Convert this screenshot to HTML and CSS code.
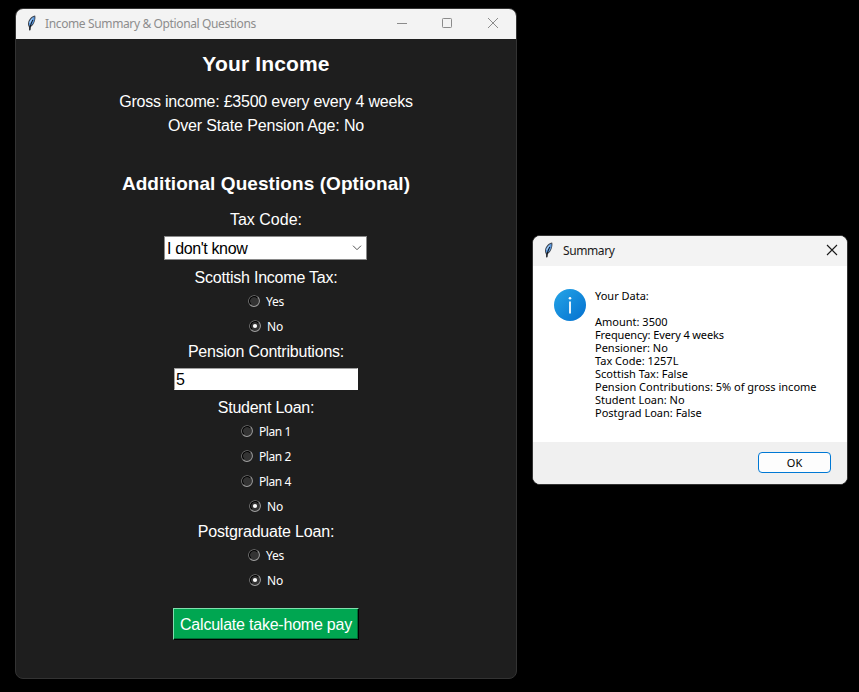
FILE: index.html
```html
<!DOCTYPE html>
<html lang="en">
<head>
<meta charset="utf-8">
<title>Income Summary &amp; Optional Questions</title>
<link rel="stylesheet" href="styles.css">
</head>
<body>
<svg width="0" height="0" class="defs">
  <symbol id="feather" viewBox="0 0 9 16">
    <path d="M8.1 .5 C5.2 .8 2.4 3.6 1.4 6.6 C.8 8.6 .9 10.6 1.9 12 L2.4 15.4 L3.3 15.2 L3.4 12.3 C5.6 11.2 7.6 8 8.2 4.6 C8.5 3 8.5 1.4 8.1 .5Z" fill="#3c4048"/>
    <path d="M7.4 1.5 C5 2.4 2.8 5 2 7.4 L2 10 L3 11 C5.4 9.6 7 7.4 7.5 4.4 Z" fill="#5b9ae0"/>
    <path d="M6.2 2.4 C4.4 3.6 3 5.4 2.4 7.4 L3 8.4 Z" fill="#a9cdf2"/>
    <path d="M5.9 5 C4.5 7.4 3.2 10 2.8 15.2" fill="none" stroke="#0c1017" stroke-width="1"/>
  </symbol>
  <symbol id="radio-ring" viewBox="0 0 12 12">
    <circle cx="6" cy="6" r="5" fill="#333"/>
    <path d="M1.76 10.24A6 6 0 0 1 10.24 1.76" transform="translate(.5 .5) scale(.92)" fill="none" stroke="#777" stroke-width="1.1"/>
    <path d="M2.82 9.18A4.5 4.5 0 0 1 9.18 2.82" fill="none" stroke="#000" stroke-width="1.1"/>
    <path d="M10.24 1.76A6 6 0 0 1 1.76 10.24" transform="translate(.5 .5) scale(.92)" fill="none" stroke="#a0a0a0" stroke-width="1.1"/>
  </symbol>
</svg>
<main class="desktop">
  <section class="window form-window">
    <header class="titlebar inactive">
      <svg class="feather" width="9" height="16"><use href="#feather"/></svg>
      <span class="title main-title">Income Summary &amp; Optional Questions</span>
      <svg class="controls" width="104" height="12" viewBox="0 0 104 12" fill="none" stroke="#8b8b8b">
        <path d="M1 6.5H11"/><rect x="46.5" y="1.5" width="9" height="9" rx=".8"/><path d="M92 1L102 11M102 1L92 11"/>
      </svg>
    </header>
    <div class="form">
      <h1>Your Income</h1>
      <p class="gross">Gross income: £3500 every every 4 weeks</p>
      <p class="age">Over State Pension Age: No</p>
      <h2>Additional Questions (Optional)</h2>
      <div class="label tax">Tax Code:</div>
      <div class="combo"><span>I don't know</span><svg width="10" height="6" viewBox="0 0 10 6" fill="none" stroke="#555"><path d="M1 .7L5 4.7L9 .7"/></svg></div>
      <div class="label scottish">Scottish Income Tax:</div>
      <div class="radio"><svg width="12" height="12"><use href="#radio-ring"/></svg><span>Yes</span></div>
      <div class="radio"><svg width="12" height="12"><use href="#radio-ring"/><circle cx="6" cy="6" r="2.1" fill="#fff"/></svg><span>No</span></div>
      <div class="label pension">Pension Contributions:</div>
      <div class="entry">5</div>
      <div class="label student">Student Loan:</div>
      <div class="radio plan"><svg width="12" height="12"><use href="#radio-ring"/></svg><span>Plan 1</span></div>
      <div class="radio plan"><svg width="12" height="12"><use href="#radio-ring"/></svg><span>Plan 2</span></div>
      <div class="radio plan"><svg width="12" height="12"><use href="#radio-ring"/></svg><span>Plan 4</span></div>
      <div class="radio"><svg width="12" height="12"><use href="#radio-ring"/><circle cx="6" cy="6" r="2.1" fill="#fff"/></svg><span>No</span></div>
      <div class="label postgrad">Postgraduate Loan:</div>
      <div class="radio"><svg width="12" height="12"><use href="#radio-ring"/></svg><span>Yes</span></div>
      <div class="radio"><svg width="12" height="12"><use href="#radio-ring"/><circle cx="6" cy="6" r="2.1" fill="#fff"/></svg><span>No</span></div>
      <div class="submit">Calculate take-home pay</div>
    </div>
  </section>

  <section class="window dialog">
    <header class="titlebar">
      <svg class="feather" width="9" height="16"><use href="#feather"/></svg>
      <span class="title">Summary</span>
      <svg class="controls" width="12" height="12" viewBox="0 0 12 12" fill="none" stroke="#1a1a1a" stroke-width="1.1"><path d="M1 1L11 11M11 1L1 11"/></svg>
    </header>
    <div class="message">
      <svg width="32" height="32" viewBox="0 0 32 32">
        <defs><linearGradient id="blue" x1="0" y1="0" x2="1" y2="1"><stop offset="0" stop-color="#25a5e7"/><stop offset="1" stop-color="#0470cf"/></linearGradient></defs>
        <circle cx="16" cy="16" r="16" fill="url(#blue)"/>
        <circle cx="16" cy="9.3" r="1.3" fill="#fff"/><path d="M16 12.5V24.5" stroke="#fff" stroke-width="1.8"/>
      </svg>
      <div class="lines">
        <div>Your Data:</div>
        <div>&nbsp;</div>
        <div>Amount: 3500</div>
        <div class="freq">Frequency: Every 4 weeks</div>
        <div>Pensioner: No</div>
        <div>Tax Code: 1257L</div>
        <div>Scottish Tax: False</div>
        <div class="contrib">Pension Contributions: 5% of gross income</div>
        <div>Student Loan: No</div>
        <div>Postgrad Loan: False</div>
      </div>
    </div>
    <footer><div class="ok">OK</div></footer>
  </section>
</main>
</body>
</html>
```
FILE: styles.css
```css
* { box-sizing: border-box; }
body { margin: 0; background: #000; overflow: hidden; }
.defs { position: absolute; }
.desktop { position: relative; width: 859px; height: 692px; }
.window { position: absolute; border: 1px solid #333; border-radius: 8px; overflow: hidden; display: flex; flex-direction: column; }
.form-window { left: 15px; top: 8px; width: 502px; height: 671px; background: #1e1e1e; }
.dialog { left: 532px; top: 235px; width: 316px; height: 250px; background: #fff; }

.titlebar { display: flex; align-items: center; height: 30px; flex: none; background: #f3f3f3; color: #1a1a1a; padding-left: 11px; font: 12px/30px "Noto Sans", "Open Sans", sans-serif; }
.inactive { color: #8d8d8d; }
.feather { margin-top: -3px; }
.title { margin-left: 10px; white-space: nowrap; letter-spacing: -.4px; }
.main-title { margin-left: 9px; letter-spacing: -.37px; }
.controls { margin-left: auto; margin-right: 16px; margin-top: -2px; }
.dialog .controls { margin-right: 9px; }

.form { display: flex; flex-direction: column; align-items: center; color: #fff; font: 16px/23px "Liberation Sans", Arial, sans-serif; white-space: nowrap; }
h1 { margin: 13px 0 14px; font-size: 21px; line-height: 24px; letter-spacing: .15px; }
p { margin: 0; line-height: 24px; }
.gross { letter-spacing: -.23px; }
.age { letter-spacing: -.15px; }
h2 { margin: 34px 0 12px; font-size: 19px; line-height: 24px; letter-spacing: .07px; }
.combo { display: flex; align-items: center; justify-content: space-between; width: 203px; height: 24px; margin: 5px 1px 6px 0; padding: 0 4px 0 2px; background: #fff; border: 1px solid #8a8a8a; color: #000; letter-spacing: -.38px; }
.entry { width: 184px; height: 22px; margin: 5px 0 6px; padding-left: 1px; background: #fff; border: 1px solid #fff; border-top-color: #a0a0a0; border-left-color: #a0a0a0; color: #000; line-height: 22px; }
.scottish, .pension { letter-spacing: -.22px; }
.student { letter-spacing: -.25px; }
.postgrad { letter-spacing: -.17px; }
.pension, .postgrad { margin-top: 1px; }
.radio { display: flex; align-items: center; gap: 6px; height: 25px; font: 12px/25px "Noto Sans", "Open Sans", sans-serif; letter-spacing: -.2px; }
.radio svg { margin-top: -1px; }
.plan { letter-spacing: -.4px; }
.submit { width: 186px; height: 32px; margin-top: 15px; background: #00a651; border: 1px solid #000; border-top-color: #80dfae; border-left-color: #80dfae; box-shadow: inset -1px -1px 0 #006b34; line-height: 32px; text-align: center; letter-spacing: -.22px; }

.message { display: flex; height: 176px; padding: 23px 0 0 21px; gap: 9px; color: #000; font: 11px/13px "Noto Sans", "Open Sans", sans-serif; white-space: nowrap; }
.freq { letter-spacing: -.12px; }
footer { flex: 1; display: flex; justify-content: flex-end; background: #f0f0f0; padding: 10px 16px 0 0; }
.ok { width: 73px; height: 21px; border: 1px solid #0078d4; border-radius: 4px; background: #fdfdfd; font: 11px/20px "Noto Sans", "Open Sans", sans-serif; text-align: center; }
```
